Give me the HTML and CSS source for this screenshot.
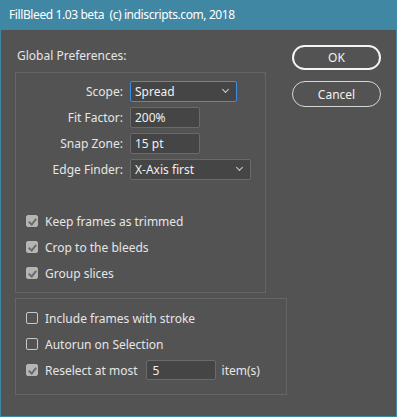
FILE: index.html
```html
<!DOCTYPE html>
<html lang="en">
<head>
  <meta charset="UTF-8" />
  <title>FillBleed 1.03 beta</title>
  <link rel="stylesheet" href="styles.css">
</head>
<body>
  <div class="window">
    <div class="titlebar">FillBleed 1.03 beta&nbsp; (c) indiscripts.com, 2018</div>

    <div class="dialog">
      <div class="main">
        <div class="heading">Global Preferences:</div>

        <div class="panel panel-global">
          <div class="fields">
            <label>Scope:</label>
            <div class="select focus scope">Spread <span class="chev"></span></div>
            <label>Fit Factor:</label>
            <div class="input short">200%</div>
            <label>Snap Zone:</label>
            <div class="input short">15 pt</div>
            <label>Edge Finder:</label>
            <div class="select edge">X-Axis first <span class="chev"></span></div>
          </div>

          <div class="checks">
            <div class="check"><span class="box on"></span>Keep frames as trimmed</div>
            <div class="check"><span class="box on"></span>Crop to the bleeds</div>
            <div class="check"><span class="box on"></span>Group slices</div>
          </div>
        </div>

        <div class="panel panel-misc">
          <div class="check"><span class="box"></span>Include frames with stroke</div>
          <div class="check"><span class="box"></span>Autorun on Selection</div>
          <div class="check"><span class="box on"></span>Reselect at most
            <div class="input count">5</div>
            <span class="unit">item(s)</span>
          </div>
        </div>
      </div>

      <div class="buttons">
        <button class="btn default">OK</button>
        <button class="btn">Cancel</button>
      </div>
    </div>
  </div>
</body>
</html>
```

FILE: styles.css
```css
body {
  margin: 0;
  background: #535353;
  font-family: 'Noto Sans', 'Open Sans', sans-serif;
  font-size: 12px;
  color: #e6e6e6;
}
.window {
  width: 397px;
  height: 417px;
  box-sizing: border-box;
  background: #535353;
  border: 1px solid #3f87a3;
  border-top: none;
  display: flex;
  flex-direction: column;
}
.titlebar {
  height: 30px;
  margin: 0 -1px;
  background: #3f87a3;
  color: #ffffff;
  font-size: 12px;
  letter-spacing: -0.4px;
  line-height: 30px;
  padding-left: 9px;
  white-space: pre;
}
.dialog {
  display: flex;
  padding-left: 14px;
}
.main {
  display: flex;
  flex-direction: column;
}
.heading {
  margin-left: 2px;
  height: 42px;
  line-height: 52px;
}
.panel {
  border: 1px solid #656565;
  box-sizing: border-box;
}
.panel-global {
  width: 251px;
  padding: 8px 0 6px 10px;
}
.panel-misc {
  width: 272px;
  margin-top: 5px;
  padding: 6px 0 11px 10px;
}
.fields {
  display: grid;
  grid-template-columns: 97px auto;
  column-gap: 7px;
  row-gap: 5px;
  align-items: center;
  justify-items: start;
}
.fields label {
  justify-self: end;
}
.input,
.select {
  height: 21px;
  box-sizing: border-box;
  background: #454545;
  border: 1px solid #6a6a6a;
  border-radius: 2px;
  line-height: 19px;
  padding-left: 4px;
  color: #f0f0f0;
  position: relative;
}
.short { width: 70px; }
.scope { width: 107px; }
.edge { width: 121px; }
.focus { border-color: #3b8fe3; }
.chev {
  position: absolute;
  right: 8px;
  top: 5px;
  width: 4px;
  height: 4px;
  border-right: 1px solid #d0d0d0;
  border-bottom: 1px solid #d0d0d0;
  transform: rotate(45deg);
}
.checks {
  margin-top: 28px;
}
.check {
  height: 26px;
  display: flex;
  align-items: center;
}
.box {
  width: 12px;
  height: 12px;
  box-sizing: border-box;
  border: 1px solid #c8c8c8;
  border-radius: 2px;
  margin-right: 7px;
  position: relative;
}
.box.on {
  background: #b5b5b5;
  border-color: #b5b5b5;
}
.box.on::after {
  content: '';
  position: absolute;
  left: 3px;
  top: 1px;
  width: 3px;
  height: 6px;
  border-right: 2px solid #6b6b6b;
  border-bottom: 2px solid #6b6b6b;
  transform: rotate(40deg);
}
.count {
  width: 70px;
  height: 20px;
  margin-left: 8px;
  padding-left: 6px;
}
.unit {
  margin-left: 6px;
}
.buttons {
  margin-left: 5px;
  padding-top: 15px;
  display: flex;
  flex-direction: column;
  gap: 11px;
}
.btn {
  width: 89px;
  height: 26px;
  border-radius: 13px;
  border: 1px solid #d6d6d6;
  background: transparent;
  color: #f2f2f2;
  font-family: inherit;
  font-size: 12px;
  padding: 0;
}
.btn.default {
  border: 2px solid #f4f4f4;
  height: 25px;
}
```
